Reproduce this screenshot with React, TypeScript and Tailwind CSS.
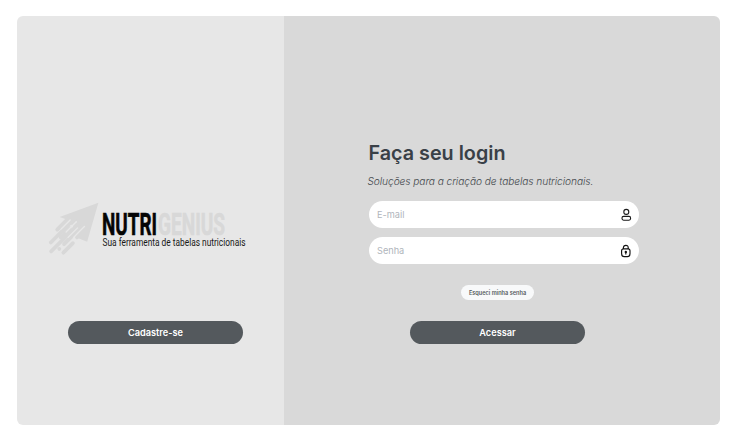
import type { ReactNode } from "react";

function Logo() {
  return (
    <svg
      viewBox="0 0 204 62"
      className="block h-[62px] w-[204px] overflow-visible"
      fontFamily="Roboto, 'Liberation Sans', sans-serif"
    >
      <g transform="translate(1 1.3) scale(.34)" fill="none" strokeLinecap="round">
        <path
          d="M157 10 L43 52 L66 60 L80 78 L100 94 L96 114 L124 125 Z"
          fill="#d8d8d8"
        />
        <g stroke="#d8d8d8" strokeWidth="11">
          <path d="M68 57 L36 89" />
          <path d="M90 54 L17 127" />
          <path d="M73 85 L46 112" />
          <path d="M104 67 L18 153" />
          <path d="M106 82 L56 132" />
          <path d="M42 146 L42.2 145.8" />
          <path d="M82 129 L54 157" />
          <path d="M112 94 L94 112" />
        </g>
        <g stroke="#e7e7e7" strokeWidth="4">
          <path d="M74 61 L48 87" />
          <path d="M92 66 L62 96" />
          <path d="M96 84 L68 112" />
          <path d="M116 80 L84 112" />
        </g>
      </g>
      <g fontSize="30.5" fontWeight="700" strokeWidth=".6">
        <text x="58" y="36.8" textLength="55" lengthAdjust="spacingAndGlyphs" fill="#050505" stroke="#050505">
          NUTRI
        </text>
        <text x="114" y="36.8" textLength="67" lengthAdjust="spacingAndGlyphs" fill="#d8d8d8" stroke="#d8d8d8">
          GENIUS
        </text>
      </g>
      <text
        x="58.5"
        y="47.5"
        fontSize="10.5"
        textLength="143"
        lengthAdjust="spacingAndGlyphs"
        fill="#181818"
      >
        Sua ferramenta de tabelas nutricionais
      </text>
    </svg>
  );
}

function UserIcon() {
  return (
    <svg viewBox="0 0 12 14" className="h-[14px] w-3" fill="none" stroke="#1a1a1a" strokeWidth="1.1">
      <circle cx="6.3" cy="3.9" r="2.5" />
      <rect x="2" y="8.4" width="8.6" height="3.8" rx="1.6" />
    </svg>
  );
}

function LockIcon() {
  return (
    <svg viewBox="0 0 12 14" className="h-[14px] w-3" fill="none" stroke="#111" strokeWidth="1.15">
      <path d="M3.4 5V3.6Q3.4 1.4 5.8 1.4T8.2 3.6V5" />
      <path d="M3.6 4.8H8Q10 4.8 10 6.8V9.6Q10 12.6 7.4 12.6H4.2Q1.6 12.6 1.6 9.6V6.8Q1.6 4.8 3.6 4.8Z" />
      <circle cx="5.8" cy="7.9" r=".6" fill="#111" />
      <path d="M5.8 8v2.4" />
    </svg>
  );
}

function Field({ label, children }: { label: string; children: ReactNode }) {
  return (
    <div className="flex h-[27px] w-[270.5px] items-center justify-between rounded-full bg-white pr-[7px] pl-[8.5px]">
      <span className="text-[9.2px] text-[#b0b5bb]">{label}</span>
      {children}
    </div>
  );
}

function Button({ children }: { children: ReactNode }) {
  return (
    <button className="block h-[23px] w-[175px] rounded-full bg-[#54595d] text-[9.2px] leading-none font-semibold text-white">
      {children}
    </button>
  );
}

export default function App() {
  return (
    <div className="h-[443px] w-[736px] bg-white pt-4 pl-[17px] font-['Inter','Liberation_Sans',sans-serif]">
      <main className="flex h-[409px] w-[702.5px] overflow-hidden rounded-[6px]">
        <section className="w-[267px] bg-[#e7e7e7] pt-[182px] pl-[27px]">
          <Logo />
          <div className="pt-[61px] pl-6">
            <Button>Cadastre-se</Button>
          </div>
        </section>
        <section className="flex-1 bg-[#d9d9d9] pt-[124px] pl-[84.5px]">
          <h1 className="text-[19.75px] leading-[26px] font-semibold text-[#394047]">Faça seu login</h1>
          <p className="mt-2 -ml-px text-[10.2px] leading-[14px] font-light tracking-[-0.08px] whitespace-nowrap text-[#454a4e] italic">
            Soluções para a criação de tabelas nutricionais.
          </p>
          <div className="mt-[13px] flex flex-col gap-[9px]">
            <Field label="E-mail">
              <UserIcon />
            </Field>
            <Field label="Senha">
              <LockIcon />
            </Field>
          </div>
          <div className="flex w-[258px] flex-col items-center gap-[21px] pt-[21px]">
            <button className="h-[15px] w-[73px] rounded-full bg-[#f8f9fa] pt-0.5 text-[5.6px] leading-none font-semibold whitespace-nowrap text-[#54595d]">
              Esqueci minha senha
            </button>
            <Button>Acessar</Button>
          </div>
        </section>
      </main>
    </div>
  );
}
